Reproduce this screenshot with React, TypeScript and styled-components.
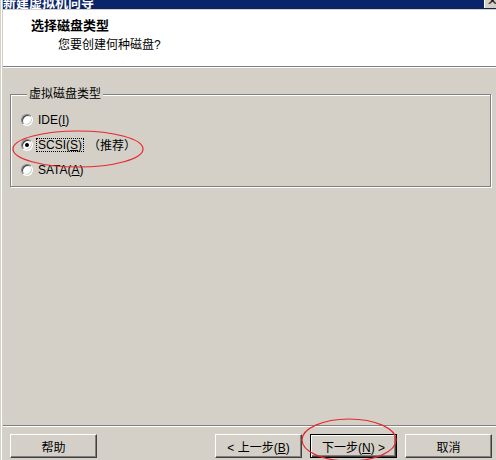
import React from 'react';
import styled, { createGlobalStyle } from 'styled-components';

const GlobalStyle = createGlobalStyle`
  html, body {
    margin: 0;
    padding: 0;
    background: #d4d0c8;
  }
  body {
    font-family: "Liberation Sans", "Noto Sans CJK SC", sans-serif;
    font-size: 12px;
    color: #000;
  }
`;

interface DiskOption {
  label: string;
  key: string;
  note?: string;
}

const options: DiskOption[] = [
  { label: 'IDE', key: 'I' },
  { label: 'SCSI', key: 'S', note: '（推荐）' },
  { label: 'SATA', key: 'A' },
];

const Mnemonic: React.FC<{ text: string; k: string }> = ({ text, k }) => (
  <>
    {text}(<u>{k}</u>)
  </>
);

const Annotation: React.FC<{ cx: number; cy: number; rx: number; ry: number }> = ({ cx, cy, rx, ry }) => (
  <Overlay $left={cx - rx - 2} $top={cy - ry - 2} width={rx * 2 + 4} height={ry * 2 + 4}>
    <ellipse cx={rx + 2} cy={ry + 2} rx={rx} ry={ry} fill="none" stroke="#e8282c" strokeWidth={1.2} />
  </Overlay>
);

const App: React.FC = () => {
  const selected = 'SCSI';

  return (
    <Window>
      <GlobalStyle />
      <TitleBar>
        <TitleText>新建虚拟机向导</TitleText>
        <CloseButton>
          <svg width="16" height="14" viewBox="0 0 16 14">
            <path d="M4 3 L11 10 M5 3 L12 10 M11 3 L4 10 M12 3 L5 10" stroke="#000" strokeWidth="1" />
          </svg>
        </CloseButton>
      </TitleBar>

      <Header>
        <HeaderTitle>选择磁盘类型</HeaderTitle>
        <HeaderSub>您要创建何种磁盘?</HeaderSub>
      </Header>
      <Separator />

      <Body>
        <GroupBox>
          <Legend>虚拟磁盘类型</Legend>
          {options.map((o) => (
            <RadioRow key={o.label}>
              <Radio $checked={o.label === selected} />
              <RadioLabel $focused={o.label === selected}>
                <Mnemonic text={o.label} k={o.key} />
              </RadioLabel>
              {o.note && <Note>{o.note}</Note>}
            </RadioRow>
          ))}
        </GroupBox>
      </Body>

      <Separator />
      <Footer>
        <Button>帮助</Button>
        <Spacer />
        <Button>&lt; 上一步(<u>B</u>)</Button>
        <Button $default>下一步(<u>N</u>) &gt;</Button>
        <Button>取消</Button>
      </Footer>

      <Annotation cx={77} cy={149} rx={65} ry={18} />
      <Annotation cx={348} cy={440} rx={47} ry={21} />
    </Window>
  );
};

const Window = styled.div`
  position: relative;
  width: 496px;
  height: 460px;
  box-sizing: border-box;
  overflow: hidden;
  display: flex;
  flex-direction: column;
  border-left: 1px solid #d4d0c8;
  padding-left: 2px;
  background: linear-gradient(to right, #ffffff 1px, #d4d0c8 1px);
`;

const TitleBar = styled.div`
  height: 9px;
  display: flex;
  align-items: flex-end;
  overflow: hidden;
  background: #0a246a;
  border-bottom: 1px solid #d4d0c8;
  flex-shrink: 0;
`;

const TitleText = styled.div`
  color: #fff;
  font-weight: bold;
  font-size: 13px;
  line-height: 16px;
  margin-bottom: -2px;
  white-space: nowrap;
`;

const CloseButton = styled.div`
  margin-left: auto;
  margin-right: -4px;
  width: 16px;
  height: 14px;
  margin-bottom: 1px;
  flex-shrink: 0;
  box-sizing: border-box;
  background: #d4d0c8;
  border-left: 1px solid #fff;
  display: flex;
`;

const Header = styled.div`
  height: 56px;
  box-sizing: border-box;
  background: #fff;
  padding: 8px 0 0 28px;
  flex-shrink: 0;
`;

const HeaderTitle = styled.div`
  font-weight: bold;
  font-size: 13px;
  line-height: 16px;
`;

const HeaderSub = styled.div`
  margin: 4px 0 0 27px;
  font-size: 12px;
  line-height: 14px;
`;

const Separator = styled.div`
  height: 0;
  border-top: 1px solid #808080;
  border-bottom: 1px solid #fff;
  flex-shrink: 0;
`;

const Body = styled.div`
  flex: 1;
  padding: 19px 5px 0 7px;
`;

const GroupBox = styled.fieldset`
  margin: 0;
  padding: 6px 10px 4px;
  border: 1px solid #808080;
  box-shadow: 1px 1px 0 #fff, inset 1px 1px 0 #fff;
`;

const Legend = styled.legend`
  margin-left: 6px;
  padding: 0 2px;
  font-size: 12px;
  line-height: 14px;
  background: #d4d0c8;
`;

const RadioRow = styled.div`
  height: 25px;
  display: flex;
  align-items: center;
`;

const Radio = styled.span<{ $checked?: boolean }>`
  position: relative;
  width: 12px;
  height: 12px;
  box-sizing: border-box;
  border-radius: 50%;
  background: #fff;
  border: 1px solid;
  border-color: #808080 #fff #fff #808080;
  box-shadow: inset 1px 1px 0 #404040, inset -1px -1px 0 #d4d0c8;
  margin-right: 4px;
  flex-shrink: 0;
  &::after {
    content: '';
    display: ${(p) => (p.$checked ? 'block' : 'none')};
    position: absolute;
    left: 3px;
    top: 3px;
    width: 4px;
    height: 4px;
    border-radius: 50%;
    background: #000;
  }
`;

const RadioLabel = styled.span<{ $focused?: boolean }>`
  padding: 0 1px;
  line-height: 12px;
  outline: ${(p) => (p.$focused ? '1px dotted #000' : 'none')};
  outline-offset: 0;
`;

const Note = styled.span`
  margin-left: 5px;
`;

const Footer = styled.div`
  height: 33px;
  box-sizing: border-box;
  padding: 7px 4px 0 7px;
  display: flex;
  gap: 8px;
  flex-shrink: 0;
`;

const Spacer = styled.div`
  flex: 1;
`;

const Button = styled.button<{ $default?: boolean }>`
  width: 87px;
  height: 24px;
  padding: 0;
  font-family: inherit;
  font-size: 12px;
  color: #000;
  background: #d4d0c8;
  border: 1px solid;
  border-color: ${(p) => (p.$default ? '#000' : '#fff #404040 #404040 #fff')};
  box-shadow: ${(p) =>
    p.$default
      ? 'inset 1px 1px 0 #fff, inset -1px -1px 0 #404040, inset -2px -2px 0 #808080'
      : 'inset -1px -1px 0 #808080'};
`;

const Overlay = styled.svg<{ $left: number; $top: number }>`
  position: absolute;
  left: ${(p) => p.$left}px;
  top: ${(p) => p.$top}px;
  pointer-events: none;
`;

export default App;
